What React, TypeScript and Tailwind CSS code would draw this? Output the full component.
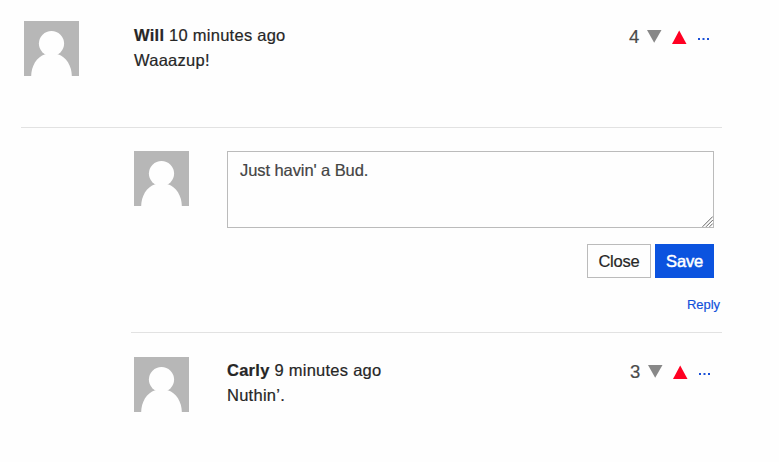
import React from "react";

function Avatar() {
  return (
    <svg className="block size-[55px] shrink-0" viewBox="0 0 55 55" role="img" aria-label="Avatar">
      <rect width="55" height="55" fill="#b7b7b7" />
      <circle cx="27.5" cy="22.6" r="12.6" fill="#fefefe" />
      <path d="M7.2 55C7.2 45.5 12.4 35.8 21.2 33.2H33.8C42.6 35.8 47.8 45.5 47.8 55Z" fill="#fefefe" />
    </svg>
  );
}

function Votes({ count }: { count: number }) {
  return (
    <div className="flex h-[25px] w-[93px] shrink-0 items-start">
      <span className="w-[18px] pt-px text-[18.5px] leading-[25px] text-[#4a4a4a] [-webkit-text-stroke:0.2px_#4a4a4a]">{count}</span>
      <button aria-label="Vote down" className="mt-[6px]">
        <svg className="block h-[14px] w-[15px]" viewBox="0 0 15 14">
          <path d="M0 1H14.5L7.2 13.8Z" fill="#888888" />
        </svg>
      </button>
      <button aria-label="Vote up" className="mt-[7px] ml-[10px]">
        <svg className="block h-[14px] w-[15px]" viewBox="0 0 15 14">
          <path d="M0 13.9H14.5L7.2 0.6Z" fill="#ff0022" />
        </svg>
      </button>
      <button aria-label="More" className="mt-[15px] ml-[11px]">
        <svg className="block h-[2px] w-[12px]" viewBox="0 0 12 2" fill="#1a50d8">
          <rect x="0" width="2" height="2" />
          <rect x="4.5" width="2" height="2" />
          <rect x="9" width="2" height="2" />
        </svg>
      </button>
    </div>
  );
}

function CommentText({ name, time, text }: { name: string; time: string; text: string }) {
  return (
    <div className="flex-1 text-[16.5px] leading-[25px] tracking-[0.26px] text-[#262626] [-webkit-text-stroke:0.2px_#262626]">
      <p>
        <strong className="font-bold">{name}</strong> {time}
      </p>
      <p>{text}</p>
    </div>
  );
}

export default function App() {
  return (
    <main className="h-[462px] overflow-hidden bg-[#fefefe] pl-[21px] font-['Liberation_Sans',Arial,sans-serif]">
      <div className="w-[701px]">
        <article className="flex h-[128px] border-b border-[#e2e2e2] pt-[21px] pl-[3px]">
          <Avatar />
          <div className="ml-[55px] flex flex-1 items-start pt-[2px]">
            <CommentText name="Will" time="10 minutes ago" text="Waaazup!" />
            <Votes count={4} />
          </div>
        </article>
        <section className="pl-[110px]">
          <div className="flex h-[205px] border-b border-[#e2e2e2] pt-[23px] pl-[3px]">
            <Avatar />
            <div className="ml-[38px] flex flex-1 flex-col">
              <div className="relative mr-2 h-[77px]">
                <textarea
                  className="block size-full resize-none border border-[#bbbbbb] bg-[#fefefe] px-3 py-[6px] text-[16.5px] leading-6 tracking-[-0.08px] text-[#444444] outline-none [-webkit-text-stroke:0.2px_#444444]"
                  defaultValue="Just havin' a Bud."
                />
                <svg className="absolute right-px bottom-px size-[11px]" viewBox="0 0 11 11" stroke="#666666" strokeWidth="1">
                  <path d="M0.5 10.8L10.8 0.5M4 10.8L10.8 4M7.5 10.8L10.8 7.5" />
                </svg>
              </div>
              <div className="mt-4 mr-2 flex justify-end gap-1 text-[16.5px] leading-8 tracking-[-0.2px]">
                <button className="h-[34px] w-16 border border-[#bbbbbb] text-[#262626] [-webkit-text-stroke:0.2px_#262626]">Close</button>
                <button className="h-[34px] w-[59px] bg-[#0b53df] text-white [-webkit-text-stroke:0.5px_white]">Save</button>
              </div>
              <a className="mt-[17px] mr-[2px] self-end text-[13px] leading-5 tracking-[-0.05px] text-[#1150da] [-webkit-text-stroke:0.15px_#1150da]" href="#reply">
                Reply
              </a>
            </div>
          </div>
          <article className="flex pt-[24px] pl-[3px]">
            <Avatar />
            <div className="ml-[38px] -mr-px flex flex-1 items-start pt-px">
              <CommentText name="Carly" time="9 minutes ago" text="Nuthin’." />
              <Votes count={3} />
            </div>
          </article>
        </section>
      </div>
    </main>
  );
}
